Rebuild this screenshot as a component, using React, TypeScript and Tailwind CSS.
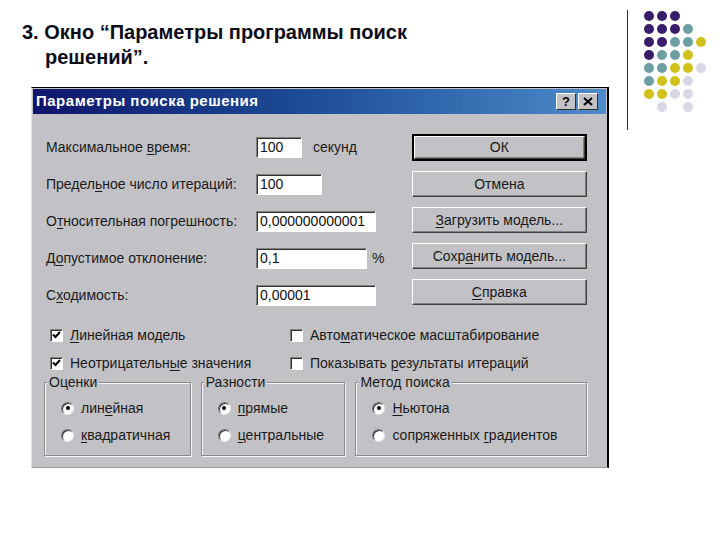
import React from "react";

const FONT = { fontFamily: '"Liberation Sans", Arial, sans-serif' };

// ключевая буква подчёркнута
function Key({ pre, k, post }: { pre?: string; k: string; post?: string }) {
  return (
    <span>
      {pre}
      <span className="underline underline-offset-2">{k}</span>
      {post}
    </span>
  );
}

function Field({ w, value }: { w: string; value: string }) {
  return (
    <div
      className={`${w} h-[21px] bg-white border border-t-[#808080] border-l-[#808080] border-b-white border-r-white shadow-[inset_1px_1px_0_#303030] pl-[3px] text-[14px] leading-[19px] text-[#111]`}
    >
      {value}
    </div>
  );
}

function Btn({ children, def }: { children: React.ReactNode; def?: boolean }) {
  const inner = (
    <div className="h-full flex items-center justify-center border border-t-white border-l-white border-b-[#404040] border-r-[#404040] shadow-[inset_-1px_-1px_0_#808080] text-[14px] text-[#1a1a1a]">
      {children}
    </div>
  );
  return def ? (
    <div className="h-[27px] border-2 border-black">{inner}</div>
  ) : (
    <div className="h-[26px]">{inner}</div>
  );
}

function Check({ on }: { on?: boolean }) {
  return (
    <div className="w-[13px] h-[13px] bg-white border border-t-[#808080] border-l-[#808080] border-b-white border-r-white shadow-[inset_1px_1px_0_#303030] flex items-center justify-center">
      {on && (
        <svg width="9" height="8" viewBox="0 0 9 8">
          <path d="M1 3.5 L3.5 6 L8 1" stroke="#000" strokeWidth="2" fill="none" />
        </svg>
      )}
    </div>
  );
}

function Radio({ on }: { on?: boolean }) {
  return (
    <div className="w-[13px] h-[13px] rounded-full bg-white border border-t-[#707070] border-l-[#707070] border-b-[#e8e8e8] border-r-[#e8e8e8] shadow-[inset_1px_1px_0_#303030] flex items-center justify-center">
      {on && <div className="w-[4px] h-[4px] rounded-full bg-black" />}
    </div>
  );
}

function Group({
  title,
  w,
  children,
}: {
  title: string;
  w: string;
  children: React.ReactNode;
}) {
  return (
    <fieldset
      className={`${w} h-[81px] border border-[#8a8a8a] shadow-[inset_1px_1px_0_#f4f4f4,1px_1px_0_#f4f4f4] px-0`}
    >
      <legend className="ml-[2px] px-[2px] bg-[#c2c2c6] text-[14px] leading-[14px] text-[#1a1a1a]">
        {title}
      </legend>
      <div className="flex flex-col gap-[11px] pt-[11px]">{children}</div>
    </fieldset>
  );
}

const DOTS = [
  "PPP..",
  "PPPT.",
  "PPTTY",
  "PTTY.",
  "TTYYL",
  "TYYL.",
  "YYLL.",
  ".L.L.",
];

const DOT_COLOR: Record<string, string> = {
  P: "bg-[#3a1d6a]",
  T: "bg-[#6c9ea3]",
  Y: "bg-[#d0c11c]",
  L: "bg-[#d7d7e6]",
  ".": "bg-transparent",
};

export default function App() {
  return (
    <div className="w-[720px] h-[540px] bg-white flex overflow-hidden" style={FONT}>
      <div className="w-[627px] shrink-0">
        {/* заголовок слайда */}
        <div className="pt-[20px] pl-[22px] text-[20px] leading-[25px] font-bold text-[#0d0d1a]">
          <p>3. Окно “Параметры программы поиск</p>
          <p className="pl-[23px]">решений”.</p>
        </div>

        {/* окно диалога */}
        <div className="mt-[17px] ml-[31px] w-[578px] h-[381px] bg-[#c2c2c6] border-t border-t-black border-l border-l-[#e2e2e2] border-r-2 border-r-black border-b border-b-[#9a9a9a] p-[1px] flex flex-col">
          <div className="h-[25px] bg-linear-to-r from-[#10146a] via-[#1f4f98] to-[#4d8cca] flex items-center pl-[3px] pr-[8px]">
            <span className="text-white font-bold text-[15px] tracking-[0.5px]">
              Параметры поиска решения
            </span>
            <div className="ml-auto flex gap-[2px]">
              <div className="w-[20px] h-[17px] bg-[#c2c2c6] border border-t-white border-l-white border-b-[#303030] border-r-[#303030] flex items-center justify-center text-[13px] font-bold leading-none text-black">
                ?
              </div>
              <div className="w-[20px] h-[17px] bg-[#c2c2c6] border border-t-white border-l-white border-b-[#303030] border-r-[#303030] flex items-center justify-center">
                <svg width="10" height="9" viewBox="0 0 10 9">
                  <path d="M1 1 L9 8 M9 1 L1 8" stroke="#000" strokeWidth="2" />
                </svg>
              </div>
            </div>
          </div>

          <div className="pt-[20px] pl-[13px] pr-[19px] text-[14px] text-[#1a1a1a]">
            <div className="flex">
              <div className="flex flex-col gap-[11px] w-[367px]">
                <div className="h-[26px] flex items-center">
                  <span className="w-[210px]">
                    <Key pre="Максимальное " k="в" post="ремя:" />
                  </span>
                  <Field w="w-[46px]" value="100" />
                  <span className="ml-[11px]">секунд</span>
                </div>
                <div className="h-[26px] flex items-center">
                  <span className="w-[210px]">
                    <Key pre="Предел" k="ь" post="ное число итераций:" />
                  </span>
                  <Field w="w-[66px]" value="100" />
                </div>
                <div className="h-[26px] flex items-center">
                  <span className="w-[210px]">
                    <Key pre="О" k="т" post="носительная погрешность:" />
                  </span>
                  <Field w="w-[120px]" value="0,000000000001" />
                </div>
                <div className="h-[26px] flex items-center">
                  <span className="w-[210px]">
                    <Key pre="Д" k="о" post="пустимое отклонение:" />
                  </span>
                  <Field w="w-[111px]" value="0,1" />
                  <span className="ml-[5px]">%</span>
                </div>
                <div className="h-[26px] flex items-center">
                  <span className="w-[210px]">
                    <Key pre="С" k="х" post="одимость:" />
                  </span>
                  <Field w="w-[120px]" value="0,00001" />
                </div>
              </div>

              <div className="flex flex-col gap-[10px] w-[176px]">
                <Btn def>ОК</Btn>
                <Btn>Отмена</Btn>
                <Btn>
                  <Key k="З" post="агрузить модель..." />
                </Btn>
                <Btn>
                  <Key pre="Сохр" k="а" post="нить модель..." />
                </Btn>
                <Btn>
                  <Key k="С" post="правка" />
                </Btn>
              </div>
            </div>

            {/* флажки */}
            <div className="mt-[19px] grid grid-cols-[240px_1fr] gap-y-[12px] pl-[4px]">
              <div className="h-[16px] flex items-center gap-[7px]">
                <Check on />
                <Key k="Л" post="инейная модель" />
              </div>
              <div className="h-[16px] flex items-center gap-[7px]">
                <Check />
                <Key pre="Авто" k="м" post="атическое масштабирование" />
              </div>
              <div className="h-[16px] flex items-center gap-[7px]">
                <Check on />
                <Key pre="Неотрицательн" k="ы" post="е значения" />
              </div>
              <div className="h-[16px] flex items-center gap-[7px]">
                <Check />
                <Key pre="Показывать " k="р" post="езультаты итераций" />
              </div>
            </div>

            {/* группы */}
            <div className="mt-[4px] -ml-[2px] flex gap-[10px]">
              <Group title="Оценки" w="w-[147px]">
                <div className="h-[16px] flex items-center gap-[7px] pl-[16px]">
                  <Radio on />
                  <Key pre="лин" k="е" post="йная" />
                </div>
                <div className="h-[16px] flex items-center gap-[7px] pl-[16px]">
                  <Radio />
                  <Key k="к" post="вадратичная" />
                </div>
              </Group>
              <Group title="Разности" w="w-[145px]">
                <div className="h-[16px] flex items-center gap-[7px] pl-[16px]">
                  <Radio on />
                  <Key k="п" post="рямые" />
                </div>
                <div className="h-[16px] flex items-center gap-[7px] pl-[16px]">
                  <Radio />
                  <Key k="ц" post="ентральные" />
                </div>
              </Group>
              <Group title="Метод поиска" w="w-[232px]">
                <div className="h-[16px] flex items-center gap-[7px] pl-[16px]">
                  <Radio on />
                  <Key k="Н" post="ьютона" />
                </div>
                <div className="h-[16px] flex items-center gap-[7px] pl-[16px]">
                  <Radio />
                  <Key pre="сопряженных " k="г" post="радиентов" />
                </div>
              </Group>
            </div>
          </div>
        </div>
      </div>

      {/* декоративная линия и точки */}
      <div className="w-px h-[120px] mt-[10px] bg-[#2a2a2a] shrink-0" />
      <div className="ml-[16px] mt-[11px] flex flex-col gap-[3px]">
        {DOTS.map((row, i) => (
          <div key={i} className="flex gap-[3px]">
            {row.split("").map((c, j) => (
              <div key={j} className={`w-[10px] h-[10px] rounded-full ${DOT_COLOR[c]}`} />
            ))}
          </div>
        ))}
      </div>
    </div>
  );
}
